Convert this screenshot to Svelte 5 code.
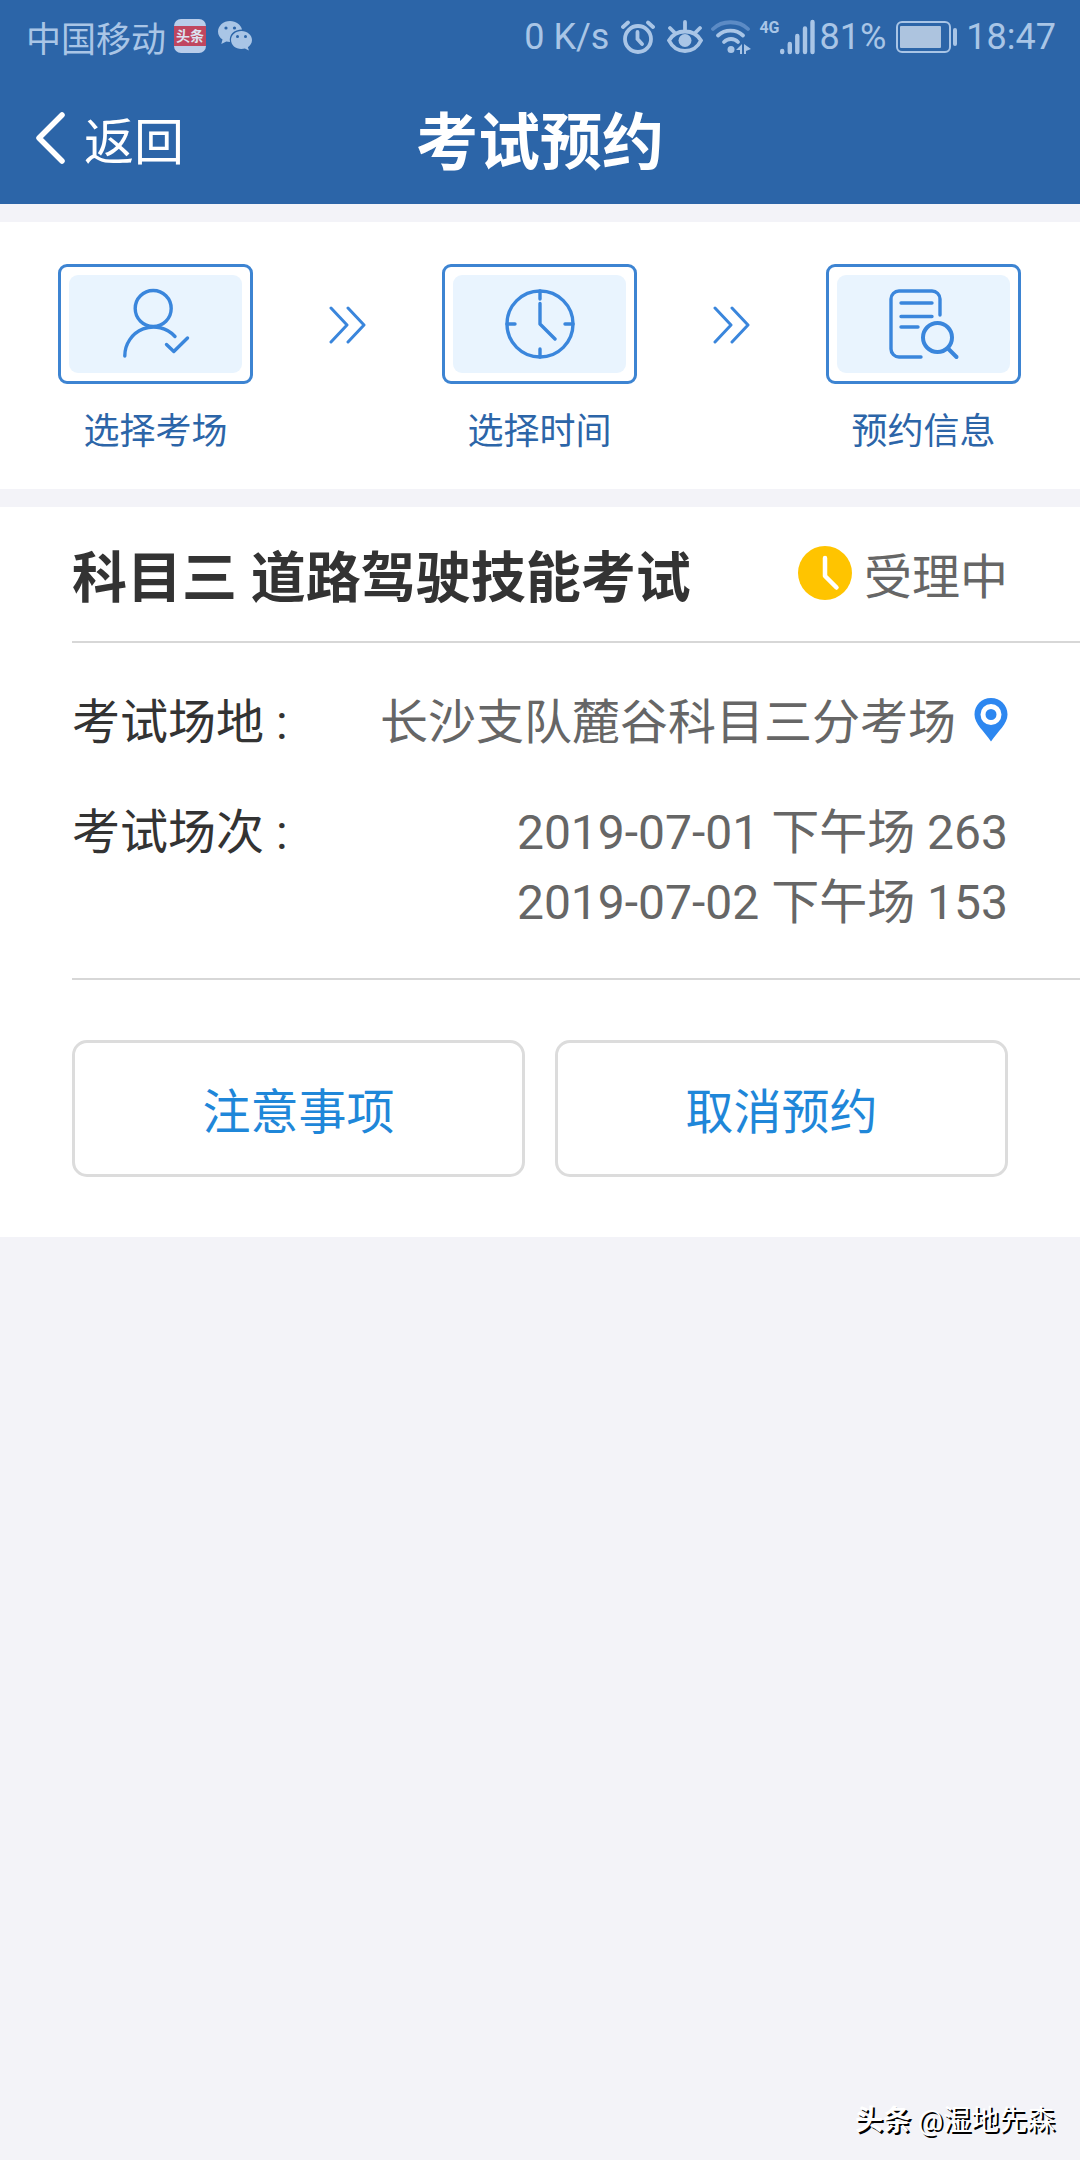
<script>
    const steps = [
        { icon: 'person', label: '选择考场' },
        { icon: 'clock', label: '选择时间' },
        { icon: 'search', label: '预约信息' }
    ]

    const exam = {
        name: '科目三 道路驾驶技能考试',
        status: '受理中',
        place: '长沙支队麓谷科目三分考场',
        sessions: ['2019-07-01 下午场 263', '2019-07-02 下午场 153']
    }
</script>

<div class="page">
    <header>
        <div class="status-bar">
            <div class="status-left">
                <span>中国移动</span>
                <span class="toutiao"><b>头条</b></span>
                <svg width="34" height="30" viewBox="0 0 34 30">
                    <path fill="#a9c5e6" d="M12 0C5.400 0 0 4.700 0 10.500c0 3.300 1.700 6.200 4.500 8.100L3.300 23l5-2.600c1.200.3 2.400.5 3.700.5-1.400-7 4-12.300 12-12.300C23 3.600 18 0 12 0z" />
                    <path fill="#a9c5e6" d="M23.400 10C17.500 10 13 14 13 19s4.500 9 10.400 9c1.200 0 2.400-.2 3.500-.5l4 2-1-3.300C32.400 24.500 34 22 34 19c0-5-4.700-9-10.600-9z" />
                    <g fill="#2c65a8">
                        <circle cx="8" cy="7" r="1.600" />
                        <circle cx="16.500" cy="7" r="1.600" />
                        <circle cx="19.500" cy="15.500" r="1.500" />
                        <circle cx="27.500" cy="15.500" r="1.500" />
                    </g>
                </svg>
            </div>
            <div class="status-right">
                <span>0 K/s</span>
                <svg class="alarm" width="34" height="34" viewBox="0 0 34 34" fill="none" stroke="#a9c5e6" stroke-width="3.800" stroke-linecap="round">
                    <circle cx="17" cy="19" r="13" />
                    <path d="M16.500 12v7l4.500 5M2 7l5-4.500M32 7l-5-4.500" />
                </svg>
                <svg class="eye" width="36" height="34" viewBox="0 0 36 34" fill="none" stroke="#a9c5e6" stroke-width="3.800" stroke-linecap="round">
                    <path d="M2 20.500C9 8.500 27 8.500 34 20.500 27 34.500 9 34.500 2 20.500zM18 2v8M3 8l4 4M33 8l-4 4" />
                    <circle cx="18" cy="20.500" r="6.500" fill="#a9c5e6" stroke="none" />
                </svg>
                <svg class="wifi" width="40" height="34" viewBox="0 0 40 34" fill="none" stroke="#a9c5e6" stroke-width="3.800" stroke-linecap="round">
                    <path stroke="#5c8bc5" d="M2 9C11 0 28 0 37 9" />
                    <path d="M7 15.500c7-6.500 18-6.500 25 0M13 22c4-4 10-4 14 0" />
                    <circle cx="20" cy="29.500" r="3.500" fill="#a9c5e6" stroke="none" />
                    <path fill="#a9c5e6" stroke="none" d="M31 24v10h-2v-4h-4zM33 24v10h2v-3l5-2z" />
                </svg>
                <span class="network">4G</span>
                <svg width="35" height="36" viewBox="0 0 35 36" stroke="#a9c5e6" stroke-width="4.400" stroke-linecap="round">
                    <path d="M2.200 32v1M9.800 25v8M17.300 17v16M25 9.500V33M32.500 3v30" />
                </svg>
                <span class="percent">81%</span>
                <svg class="battery" width="62" height="34" viewBox="0 0 62 34">
                    <rect x="1" y="2" width="53" height="30" rx="5" fill="none" stroke="#a9c5e6" stroke-width="2" />
                    <rect x="4" y="6" width="41" height="22" rx="1" fill="#adc4df" />
                    <rect x="57" y="8" width="4" height="18" rx="2" fill="#a9c5e6" />
                </svg>
                <span>18:47</span>
            </div>
        </div>

        <div class="nav">
            <button class="back">
                <svg width="30" height="52" viewBox="0 0 30 52" fill="none" stroke="#fff" stroke-width="5.500" stroke-linecap="round" stroke-linejoin="round">
                    <path d="M26 3L3 26l23 23" />
                </svg>
                返回
            </button>
            <h1>考试预约</h1>
        </div>
    </header>

    <section class="steps">
        {#each steps as step, i}
            {#if i > 0}
                <svg class="arrow" width="38" height="38" viewBox="0 0 38 38" fill="none" stroke="#3a86dc" stroke-width="3" stroke-linecap="round" stroke-linejoin="round">
                    <path d="M2 2l16 17L2 36M19 2l16 17-16 17" />
                </svg>
            {/if}
            <div class="step">
                <div class="step-box">
                    <div class="step-icon">
                        <svg width="72" height="72" viewBox="0 0 72 72" fill="none" stroke="#3a86dc" stroke-width="3.400" stroke-linecap="round" stroke-linejoin="round">
                            {#if step.icon === 'person'}
                                <circle cx="33.200" cy="20.500" r="18" />
                                <path d="M4.800 68A28.800 28.800 0 0 1 55 48.500M46.500 56.500l7.300 7L67.500 50" />
                            {:else if step.icon === 'clock'}
                                <circle cx="36" cy="36" r="33" />
                                <path d="M36 3v8M36 61v8M3 36h8M61 36h8M36 15.500V36l15 15" />
                            {:else}
                                <path d="M52 27V11a8 8 0 0 0-8-8H11a8 8 0 0 0-8 8v50a8 8 0 0 0 8 8h22M13 15h31M13 28.500h31M13 39h17" />
                                <circle cx="49.500" cy="49.500" r="14.500" stroke-width="4" />
                                <path stroke-width="4" d="M60 60.500l8.500 8.500" />
                            {/if}
                        </svg>
                    </div>
                </div>
                <span class="step-label">{step.label}</span>
            </div>
        {/each}
    </section>

    <section class="card">
        <div class="card-head">
            <h2>{exam.name}</h2>
            <div class="state">
                <svg width="54" height="54" viewBox="0 0 54 54">
                    <circle cx="27" cy="27" r="27" fill="#ffc400" />
                    <path d="M27 12v18l11.500 11.500" fill="none" stroke="#fff" stroke-width="4.500" stroke-linecap="round" stroke-linejoin="round" />
                </svg>
                {exam.status}
            </div>
        </div>

        <dl>
            <div class="row">
                <dt>考试场地 :</dt>
                <dd class="place">
                    {exam.place}
                    <svg width="34" height="44" viewBox="0 0 34 44">
                        <path fill="#2d87f0" d="M17 0C7.500 0 .5 7.200.5 16.500.5 26 10 33 17 43.500 24 33 33.500 26 33.500 16.500 33.500 7.200 26.500 0 17 0z" />
                        <circle cx="17" cy="16.500" r="8" fill="#2d87f0" stroke="#fff" stroke-width="5" />
                    </svg>
                </dd>
            </div>
            <div class="row">
                <dt>考试场次 :</dt>
                <dd>
                    {#each exam.sessions as session}
                        <div>{session}</div>
                    {/each}
                </dd>
            </div>
        </dl>

        <div class="actions">
            <button>注意事项</button>
            <button>取消预约</button>
        </div>
    </section>

    <div class="watermark"><b>头条</b> @湿地先森</div>
</div>

<style>
    :global(body) {
        margin: 0;
        background: #f3f3f8;
    }
    .page {
        position: relative;
        min-height: 100vh;
        font-family: Roboto, "Noto Sans CJK SC", sans-serif;
        font-size: 48px;
        color: #666;
        background: #f3f3f8;
    }
    button {
        font: inherit;
        cursor: pointer;
    }
    svg {
        display: block;
        flex: none;
    }
    header {
        background: #2c65a8;
        color: #fff;
    }
    .status-bar {
        display: flex;
        justify-content: space-between;
        align-items: center;
        height: 72px;
        padding: 0 24px 0 26px;
        font-size: 36px;
        color: #a9c5e6;
    }
    .status-left,
    .status-right {
        display: flex;
        align-items: center;
    }
    .status-left {
        font-size: 35px;
    }
    .status-right {
        padding-top: 2px;
    }
    .toutiao {
        display: flex;
        align-items: center;
        width: 32px;
        height: 34px;
        margin: 0 12px 0 8px;
        border-radius: 7px;
        background: #b9cdea;
    }
    .toutiao b {
        width: 32px;
        background: #c0465f;
        color: #dbe3f2;
        font-size: 14px;
        line-height: 20px;
        text-align: center;
    }
    .alarm,
    .eye {
        margin-left: 12px;
    }
    .wifi {
        margin-left: 8px;
    }
    .network {
        align-self: flex-start;
        margin-left: 8px;
        font-size: 16px;
        font-weight: 700;
        line-height: 24px;
    }
    .percent {
        margin-left: 5px;
    }
    .battery {
        margin: 0 8px 0 10px;
    }
    .nav {
        display: grid;
        grid-template-columns: 1fr auto 1fr;
        align-items: center;
        height: 132px;
        padding: 0 36px;
    }
    .back {
        display: flex;
        align-items: center;
        gap: 18px;
        padding: 0;
        border: 0;
        background: none;
        color: #fff;
        font-size: 50px;
    }
    h1 {
        margin: 0;
        font-size: 62px;
        font-weight: 700;
    }
    .steps {
        display: flex;
        justify-content: space-between;
        margin: 18px 0;
        padding: 42px 59px 33px 58px;
        background: #fff;
    }
    .arrow {
        margin-top: 42px;
    }
    .step {
        display: flex;
        flex-direction: column;
        align-items: center;
    }
    .step-box {
        box-sizing: border-box;
        width: 195px;
        height: 120px;
        padding: 8px;
        border: 3px solid #3d84d2;
        border-radius: 9px;
    }
    .step-icon {
        display: flex;
        justify-content: center;
        align-items: center;
        height: 100%;
        border-radius: 9px;
        background: #e9f4fe;
    }
    .step-label {
        margin-top: 24px;
        font-size: 36px;
        line-height: 48px;
        color: #2c65a8;
    }
    .card {
        padding: 0 0 60px 72px;
        background: #fff;
    }
    .card-head {
        box-sizing: border-box;
        display: flex;
        justify-content: space-between;
        align-items: center;
        height: 136px;
        padding: 0 72px 3px 0;
        border-bottom: 2px solid #d7d7d7;
    }
    h2 {
        margin: 0;
        font-size: 55px;
        font-weight: 700;
        color: #333;
    }
    .state {
        display: flex;
        align-items: center;
        gap: 12px;
    }
    dl {
        display: flex;
        flex-direction: column;
        gap: 40px;
        margin: 0;
        padding: 45px 72px 40px 0;
        border-bottom: 2px solid #d7d7d7;
        line-height: 70px;
    }
    .row {
        display: flex;
        justify-content: space-between;
    }
    dt {
        color: #333;
    }
    dd {
        margin: 0;
        text-align: right;
    }
    .place {
        display: flex;
        gap: 18px;
    }
    .place svg {
        margin-top: 10px;
    }
    .actions {
        display: flex;
        gap: 30px;
        padding: 60px 72px 0 0;
    }
    .actions button {
        flex: 1;
        height: 137px;
        padding: 0 0 2px;
        border: 3px solid #dcdcdc;
        border-radius: 15px;
        background: #fff;
        color: #1f87d9;
    }
    .watermark {
        position: absolute;
        right: 25px;
        bottom: 19px;
        font-size: 28px;
        line-height: 40px;
        color: #fff;
        text-shadow: 2px 2px 0 #000;
    }
</style>
